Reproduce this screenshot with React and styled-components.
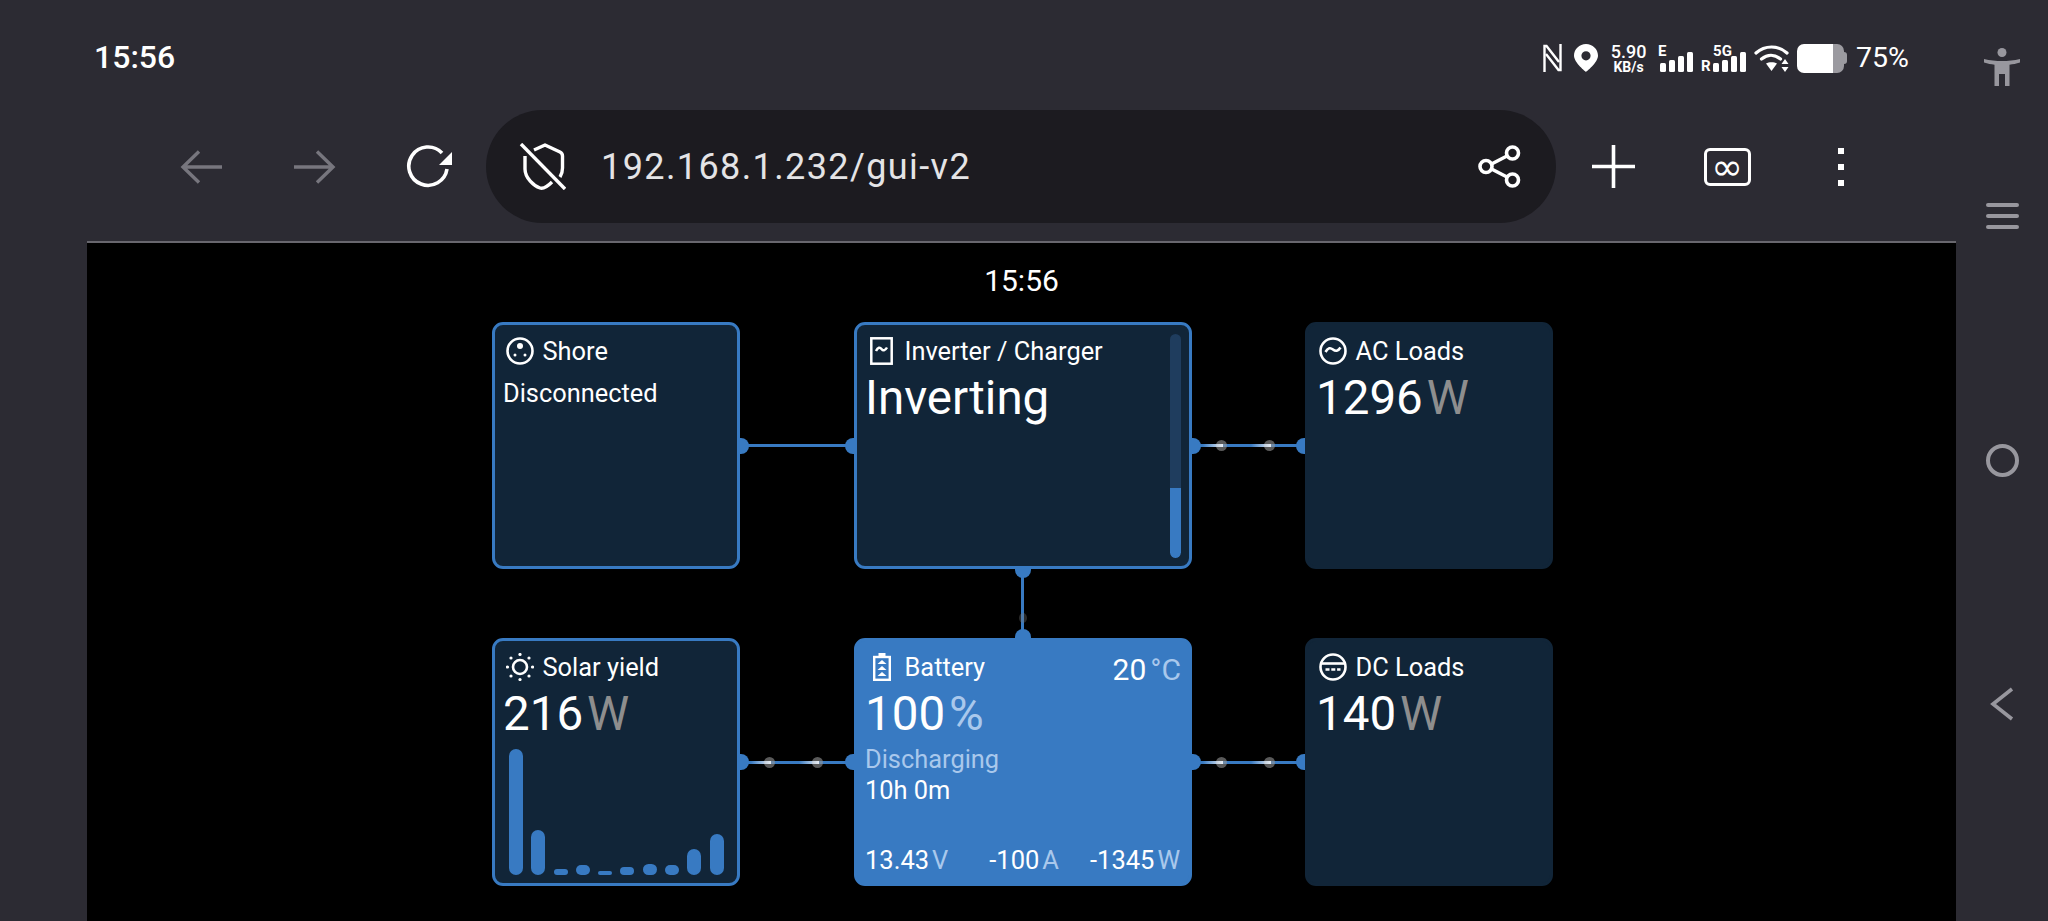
import React from "react";
import styled, { createGlobalStyle } from "styled-components";

const BLUE = "#387ac2";
const NAVY = "#112538";
const CHROME = "#2c2b33";

const GlobalStyle = createGlobalStyle`
  html, body {
    margin: 0;
    height: 921px;
    overflow: hidden;
    background: ${CHROME};
    font-family: Roboto, "Liberation Sans", sans-serif;
    color: #fff;
  }
`;

const Page = styled.div`
  display: flex;
  width: 2048px;
  height: 921px;
  overflow: hidden;
`;

const Main = styled.div`
  width: 1956px;
  display: flex;
  flex-direction: column;
`;

/* status bar */
const StatusBar = styled.div`
  height: 110px;
  box-sizing: border-box;
  padding: 42px 47px 0 94px;
  display: flex;
  justify-content: space-between;
  align-items: flex-start;
`;

const Clock = styled.div`
  font-size: 32px;
  line-height: 30px;
  font-weight: 500;
`;

const StatusIcons = styled.div`
  display: flex;
  align-items: center;
  height: 32px;
`;

const StatusItem = styled.div`
  position: relative;
  display: flex;
  margin-left: ${(p) => p.$gap || 0}px;
`;

const Speed = styled.div`
  width: 33px;
  display: flex;
  flex-direction: column;
  align-items: center;
  font-weight: 500;
  font-size: 18px;
  line-height: 17px;
  & > span + span {
    font-size: 14px;
    font-weight: 700;
    line-height: 14px;
  }
`;

const NetTag = styled.span`
  position: absolute;
  top: ${(p) => p.$top}px;
  left: ${(p) => p.$left}px;
  font-size: ${(p) => p.$size || 15}px;
  line-height: 14px;
  font-weight: 700;
`;

const SignalWrap = styled.div`
  width: ${(p) => p.$width}px;
  height: 28px;
  display: flex;
  align-items: flex-end;
  justify-content: flex-end;
`;

const Battery = styled.div`
  width: 51px;
  height: 29px;
  display: flex;
  align-items: center;
`;

const BatteryBody = styled.div`
  width: 47px;
  height: 29px;
  border-radius: 7px;
  background: linear-gradient(90deg, #fff 0 76%, #9b9aa0 76%);
`;

const BatteryTip = styled.div`
  width: 3px;
  height: 12px;
  border-radius: 0 3px 3px 0;
  background: #9b9aa0;
`;

const Percent = styled.div`
  margin-left: 8px;
  font-size: 28.5px;
  line-height: 30px;
  font-weight: 400;
`;

/* browser toolbar */
const Toolbar = styled.div`
  height: 113px;
  display: flex;
  align-items: stretch;
  padding: 0 58px 0 144px;
`;

const ToolButton = styled.div`
  width: 114px;
  display: flex;
  align-items: center;
  justify-content: center;
  color: ${(p) => (p.$disabled ? "#77767e" : "#fff")};
`;

const AddressPill = styled.div`
  flex: 1;
  display: flex;
  align-items: center;
  padding: 0 35px 0 33px;
  border-radius: 57px;
  background: #1c1b20;
`;

const Url = styled.div`
  flex: 1;
  margin-left: 35px;
  font-size: 36px;
  line-height: 40px;
  letter-spacing: 1.4px;
  color: #e4e4e6;
`;

const TabCount = styled.div`
  width: 47px;
  height: 38px;
  box-sizing: border-box;
  border: 3px solid #fff;
  border-radius: 6px;
  display: flex;
  align-items: center;
  justify-content: center;
  font-family: "DejaVu Sans", sans-serif;
  font-size: 38px;
  line-height: 30px;
`;

const MenuDots = styled.div`
  display: flex;
  flex-direction: column;
  gap: 10px;
  & > i {
    display: block;
    width: 6px;
    height: 6px;
    background: #fff;
  }
`;

/* web view */
const WebView = styled.div`
  flex: 1;
  margin: 18px 0 0 87px;
  border-top: 2px solid #68676e;
  background: #000;
  display: flex;
  flex-direction: column;
  align-items: center;
`;

const PageClock = styled.div`
  margin-top: 18px;
  height: 40px;
  font-size: 30px;
  line-height: 40px;
`;

const Overview = styled.div`
  margin: 21px 0 0 2px;
  display: grid;
  grid-template-columns: 248px 114px 338px 113px 248px;
  grid-template-rows: 247px 69px 248px;
`;

const Card = styled.div`
  position: relative;
  box-sizing: border-box;
  display: flex;
  flex-direction: column;
  padding: 9px 9px 8px;
  border: 3px solid ${(p) => (p.$outlined || p.$filled ? BLUE : NAVY)};
  border-radius: 11px;
  background: ${(p) => (p.$filled ? BLUE : NAVY)};
`;

const CardHeader = styled.div`
  display: flex;
  align-items: center;
  height: 34px;
  font-size: 25.4px;
  line-height: 34px;
`;

const HeaderIcon = styled.div`
  width: 31px;
  margin: 0 7.500px 0 0;
  display: flex;
  justify-content: center;
`;

const Status = styled.div`
  margin-top: ${(p) => p.$top}px;
  margin-left: -1px;
  font-size: 25.4px;
  line-height: 34px;
  color: ${(p) => (p.$soft ? "#a9c8ec" : "#fff")};
`;

const BigValue = styled.div`
  margin: 5px 0 0 -1px;
  font-size: 47.500px;
  font-weight: 400;
  line-height: 50px;
`;

const Unit = styled.span`
  margin-left: ${(p) => p.$gap || 4}px;
  color: ${(p) => (p.$light ? "#a9c8ec" : "#8e8e8e")};
`;

const Temperature = styled.div`
  position: absolute;
  top: 9px;
  right: 8px;
  font-size: 30px;
  line-height: 40px;
`;

const Scroll = styled.div`
  position: absolute;
  top: 9px;
  right: 8px;
  width: 11px;
  height: 224px;
  border-radius: 6px;
  overflow: hidden;
  display: flex;
  align-items: flex-end;
  background: #1f3d5e;
`;

const ScrollFill = styled.div`
  width: 100%;
  height: ${(p) => p.$h}px;
  background: ${BLUE};
  border-radius: 0 0 6px 6px;
`;

const Chart = styled.div`
  margin: auto 0 0 5px;
  display: flex;
  align-items: flex-end;
  gap: 8.300px;
`;

const Bar = styled.div`
  width: 14px;
  height: ${(p) => p.$h}px;
  border-radius: 7px;
  background: ${BLUE};
`;

const Readings = styled.div`
  margin: auto 0 0 -1px;
  display: flex;
  justify-content: space-between;
  font-size: 25.5px;
  line-height: 30px;
  & > span:nth-child(2) {
    margin-left: 10px;
  }
`;

/* connectors */
const HLink = styled.div`
  position: relative;
  display: flex;
  align-items: center;
  &::before,
  &::after {
    content: "";
    position: absolute;
    top: calc(50% - 8px);
    width: 9px;
    height: 16px;
    background: ${BLUE};
  }
  &::before {
    left: 0;
    border-radius: 0 8px 8px 0;
  }
  &::after {
    right: 0;
    border-radius: 8px 0 0 8px;
  }
`;

const HLine = styled.div`
  width: 100%;
  height: 3px;
  background: ${BLUE};
`;

const Particle = styled.div`
  position: absolute;
  top: calc(50% - 5.500px);
  left: ${(p) => p.$at - 5.5}px;
  width: 11px;
  height: 11px;
  border-radius: 50%;
  background: rgba(150, 150, 150, 0.6);
  &::before {
    content: "";
    position: absolute;
    top: 4px;
    right: 4px;
    width: 20px;
    height: 3px;
    background: linear-gradient(90deg, transparent, #e8eef5);
  }
`;

const VLink = styled.div`
  grid-column: 1 / -1;
  position: relative;
  justify-self: center;
  width: 16px;
  display: flex;
  justify-content: center;
  &::before,
  &::after {
    content: "";
    position: absolute;
    left: 0;
    width: 16px;
    height: 9px;
    background: ${BLUE};
  }
  &::before {
    top: 0;
    border-radius: 0 0 8px 8px;
  }
  &::after {
    bottom: 0;
    border-radius: 8px 8px 0 0;
  }
`;

const VLine = styled.div`
  width: 3px;
  background: ${BLUE};
`;

const FaintDot = styled.div`
  position: absolute;
  top: 44px;
  left: 4px;
  width: 8px;
  height: 10px;
  border-radius: 50%;
  background: rgba(120, 120, 120, 0.35);
`;

/* android nav rail */
const NavRail = styled.div`
  flex: 1;
  display: flex;
  flex-direction: column;
  padding-top: 39px;
  color: #98979e;
`;

const NavKey = styled.div`
  height: ${(p) => p.$h}px;
  display: flex;
  align-items: center;
  justify-content: center;
`;

const Ham = styled.div`
  display: flex;
  flex-direction: column;
  gap: 7px;
  & > i {
    display: block;
    width: 33px;
    height: 4px;
    border-radius: 2px;
    background: #98979e;
  }
`;

const Ring = styled.div`
  width: 33px;
  height: 33px;
  box-sizing: border-box;
  border: 4px solid #98979e;
  border-radius: 50%;
`;

/* icons */
const Icon = ({ w, h, children, ...rest }) => (
  <svg width={w} height={h} viewBox={`0 0 ${w} ${h}`} fill="none" stroke="currentColor" {...rest}>
    {children}
  </svg>
);

const NfcIcon = () => (
  <Icon w={19} h={28} strokeWidth={2.4}>
    <path d="M1.500 28V2h2L16 18" />
    <path d="M17.500 0v26h-2L3 10" />
  </Icon>
);

const PinIcon = () => (
  <Icon w={24} h={28} stroke="none">
    <path
      fill="#fff"
      fillRule="evenodd"
      d="M12 0C5.400 0 0 5.200 0 11.600 0 19 12 28 12 28s12-9 12-16.400C24 5.200 18.600 0 12 0Zm0 7.200a4.600 4.600 0 1 1 0 9.200 4.600 4.600 0 0 1 0-9.200Z"
    />
  </Icon>
);

const SignalBars = () => (
  <Icon w={33} h={20} stroke="none">
    <g fill="#fff">
      <rect x="0" y="11" width="6" height="9" rx="1.500" />
      <rect x="9" y="8" width="6" height="12" rx="1.500" />
      <rect x="18" y="4" width="6" height="16" rx="1.500" />
      <rect x="27" y="0" width="6" height="20" rx="1.500" />
    </g>
  </Icon>
);

const WifiIcon = () => (
  <Icon w={35} h={28} strokeWidth={3.2} strokeLinecap="round">
    <path d="M2 9c9-8 22-8 31 0" />
    <path d="M7.500 15c6-5 13-5 19 0" />
    <path fill="#fff" stroke="none" d="M12 19.500c3-1.800 8-1.800 11 0L17.500 27z" />
    <path fill="#fff" stroke="none" d="M31 15l3.500 5h-7zM31 28l-3.500-5h7z" />
  </Icon>
);

const AccessibilityIcon = () => (
  <Icon w={36} h={38} stroke="none">
    <g fill="#98979e">
      <circle cx="18" cy="4.500" r="4.500" />
      <path d="M0 11c6 1.500 12 2 18 2s12-.5 18-2v3.500c-4 1.200-7 1.800-10.500 2.200V38H21V26h-6v12h-4.500V16.700C7 16.300 4 15.700 0 14.500z" />
    </g>
  </Icon>
);

const ArrowBack = () => (
  <Icon w={42} h={34} strokeWidth={3.4}>
    <path d="M42 17H3M19 1.500 3 17l16 15.500" />
  </Icon>
);

const ArrowForward = () => (
  <Icon w={42} h={34} strokeWidth={3.4}>
    <path d="M0 17h39M23 1.500 39 17 23 32.500" />
  </Icon>
);

const ReloadIcon = () => (
  <Icon w={46} h={43} strokeWidth={3.6}>
    <path d="M36 8A19.200 19.200 0 1 0 41 24" />
    <path fill="#fff" stroke="none" d="M46 7v13H33z" />
  </Icon>
);

const ShieldOffIcon = () => (
  <Icon w={47} h={47} strokeWidth={3.4} strokeLinejoin="round">
    <path d="M15 7 26 2l15 7c2 1 2.500 2 2.500 4v12c0 3-.5 6-2.500 9" />
    <path d="M6 13v13c0 9 9 17 15 19 3 1 7-1 12-6" />
    <path d="M2 1l44 45" />
  </Icon>
);

const ShareIcon = () => (
  <Icon w={43} h={43} strokeWidth={3.6}>
    <circle cx="8" cy="21.500" r="6" />
    <circle cx="34.500" cy="8" r="6" />
    <circle cx="34.500" cy="35" r="6" />
    <path d="M13.500 19 29 11M13.500 24 29 32" />
  </Icon>
);

const PlusIcon = () => (
  <Icon w={43} h={43} strokeWidth={3.6}>
    <path d="M21.500 0v43M0 21.500h43" />
  </Icon>
);

const ShoreIcon = () => (
  <Icon w={28} h={28} strokeWidth={2.6}>
    <circle cx="14" cy="14" r="12.500" />
    <g fill="#fff" stroke="none">
      <circle cx="14" cy="9" r="3" />
      <circle cx="9" cy="18" r="1.500" />
      <circle cx="19" cy="18" r="1.500" />
    </g>
  </Icon>
);

const InverterIcon = () => (
  <Icon w={23} h={28} strokeWidth={2.5}>
    <rect x="1.300" y="1.300" width="20.400" height="25.400" />
    <path d="M6 14c2-4 4-4 5.500-2s3.500 2 5.500-1.500" />
  </Icon>
);

const AcIcon = () => (
  <Icon w={28} h={28} strokeWidth={2.6}>
    <circle cx="14" cy="14" r="12.500" />
    <path d="M6.500 15c2.500-4.500 5-4.500 7.500-2.500s5 2 7.500-2" />
  </Icon>
);

const DcIcon = () => (
  <Icon w={28} h={28} strokeWidth={2.6}>
    <circle cx="14" cy="14" r="12.500" />
    <path d="M3 10.500h22" />
    <path d="M6.500 16.500h15" strokeDasharray="4 1.800" />
  </Icon>
);

const SunIcon = () => (
  <Icon w={28} h={28} strokeWidth={2.6}>
    <circle cx="14" cy="14" r="7" />
    <g fill="#fff" stroke="none">
      <circle cx="14" cy="1.500" r="1.600" />
      <circle cx="14" cy="26.500" r="1.600" />
      <circle cx="1.500" cy="14" r="1.600" />
      <circle cx="26.500" cy="14" r="1.600" />
      <circle cx="5" cy="5" r="1.600" />
      <circle cx="23" cy="5" r="1.600" />
      <circle cx="5" cy="23" r="1.600" />
      <circle cx="23" cy="23" r="1.600" />
    </g>
  </Icon>
);

const BatteryIcon = () => (
  <Icon w={18} h={28} strokeWidth={2.4}>
    <rect x="1.200" y="4" width="15.600" height="22.800" />
    <path fill="#fff" stroke="none" d="M5.500 0h7v3h-7z" />
    <path fill="#fff" stroke="none" d="m9 7 4.500 4h-9zM9 13l4.500 4h-9zM9 19l4.500 4h-9z" />
  </Icon>
);

const ChevronIcon = () => (
  <Icon w={24} h={34} strokeWidth={3.6}>
    <path d="M22 2 3 17l19 15" />
  </Icon>
);

const solarBars = [126, 45, 6, 10, 4, 8, 11, 10, 26, 41];

const Particles = ({ at = [29, 77] }) => at.map((x) => <Particle key={x} $at={x} />);

const App = () => (
  <>
    <GlobalStyle />
    <Page>
      <Main>
        <StatusBar>
          <Clock>15:56</Clock>
          <StatusIcons>
            <NfcIcon />
            <StatusItem $gap={12}>
              <PinIcon />
            </StatusItem>
            <StatusItem $gap={14}>
              <Speed>
                <span>5.90</span>
                <span>KB/s</span>
              </Speed>
            </StatusItem>
            <StatusItem $gap={13}>
              <SignalWrap $width={35}>
                <NetTag $top={0} $left={0}>E</NetTag>
                <SignalBars />
              </SignalWrap>
            </StatusItem>
            <StatusItem $gap={8}>
              <SignalWrap $width={45}>
                <NetTag $top={0} $left={12}>5G</NetTag>
                <NetTag $top={15} $left={0}>R</NetTag>
                <SignalBars />
              </SignalWrap>
            </StatusItem>
            <StatusItem $gap={8}>
              <WifiIcon />
            </StatusItem>
            <StatusItem $gap={8}>
              <Battery>
                <BatteryBody />
                <BatteryTip />
              </Battery>
            </StatusItem>
            <Percent>75%</Percent>
          </StatusIcons>
        </StatusBar>

        <Toolbar>
          <ToolButton $disabled>
            <ArrowBack />
          </ToolButton>
          <ToolButton $disabled>
            <ArrowForward />
          </ToolButton>
          <ToolButton>
            <ReloadIcon />
          </ToolButton>
          <AddressPill>
            <ShieldOffIcon />
            <Url>192.168.1.232/gui-v2</Url>
            <ShareIcon />
          </AddressPill>
          <ToolButton>
            <PlusIcon />
          </ToolButton>
          <ToolButton>
            <TabCount>∞</TabCount>
          </ToolButton>
          <ToolButton>
            <MenuDots>
              <i />
              <i />
              <i />
            </MenuDots>
          </ToolButton>
        </Toolbar>

        <WebView>
          <PageClock>15:56</PageClock>
          <Overview>
            <Card $outlined>
              <CardHeader>
                <HeaderIcon>
                  <ShoreIcon />
                </HeaderIcon>
                Shore
              </CardHeader>
              <Status $top={8}>Disconnected</Status>
            </Card>
            <HLink>
              <HLine />
            </HLink>
            <Card $outlined>
              <CardHeader>
                <HeaderIcon>
                  <InverterIcon />
                </HeaderIcon>
                Inverter / Charger
              </CardHeader>
              <BigValue>Inverting</BigValue>
              <Scroll>
                <ScrollFill $h={70} />
              </Scroll>
            </Card>
            <HLink>
              <HLine />
              <Particles />
            </HLink>
            <Card>
              <CardHeader>
                <HeaderIcon>
                  <AcIcon />
                </HeaderIcon>
                AC Loads
              </CardHeader>
              <BigValue>
                1296<Unit>W</Unit>
              </BigValue>
            </Card>

            <VLink>
              <VLine />
              <FaintDot />
            </VLink>

            <Card $outlined>
              <CardHeader>
                <HeaderIcon>
                  <SunIcon />
                </HeaderIcon>
                Solar yield
              </CardHeader>
              <BigValue>
                216<Unit>W</Unit>
              </BigValue>
              <Chart>
                {solarBars.map((h, i) => (
                  <Bar key={i} $h={h} />
                ))}
              </Chart>
            </Card>
            <HLink>
              <HLine />
              <Particles />
            </HLink>
            <Card $filled>
              <CardHeader>
                <HeaderIcon>
                  <BatteryIcon />
                </HeaderIcon>
                Battery
              </CardHeader>
              <Temperature>
                20<Unit $light $gap={4}>°C</Unit>
              </Temperature>
              <BigValue>
                100<Unit $light>%</Unit>
              </BigValue>
              <Status $soft $top={3}>Discharging</Status>
              <Status $top={-3}>10h 0m</Status>
              <Readings>
                <span>
                  13.43<Unit $light $gap={3}>V</Unit>
                </span>
                <span>
                  -100<Unit $light $gap={3}>A</Unit>
                </span>
                <span>
                  -1345<Unit $light $gap={3}>W</Unit>
                </span>
              </Readings>
            </Card>
            <HLink>
              <HLine />
              <Particles />
            </HLink>
            <Card>
              <CardHeader>
                <HeaderIcon>
                  <DcIcon />
                </HeaderIcon>
                DC Loads
              </CardHeader>
              <BigValue>
                140<Unit>W</Unit>
              </BigValue>
            </Card>
          </Overview>
        </WebView>
      </Main>

      <NavRail>
        <NavKey $h={55}>
          <AccessibilityIcon />
        </NavKey>
        <NavKey $h={244}>
          <Ham>
            <i />
            <i />
            <i />
          </Ham>
        </NavKey>
        <NavKey $h={244}>
          <Ring />
        </NavKey>
        <NavKey $h={244}>
          <ChevronIcon />
        </NavKey>
      </NavRail>
    </Page>
  </>
);

export default App;
